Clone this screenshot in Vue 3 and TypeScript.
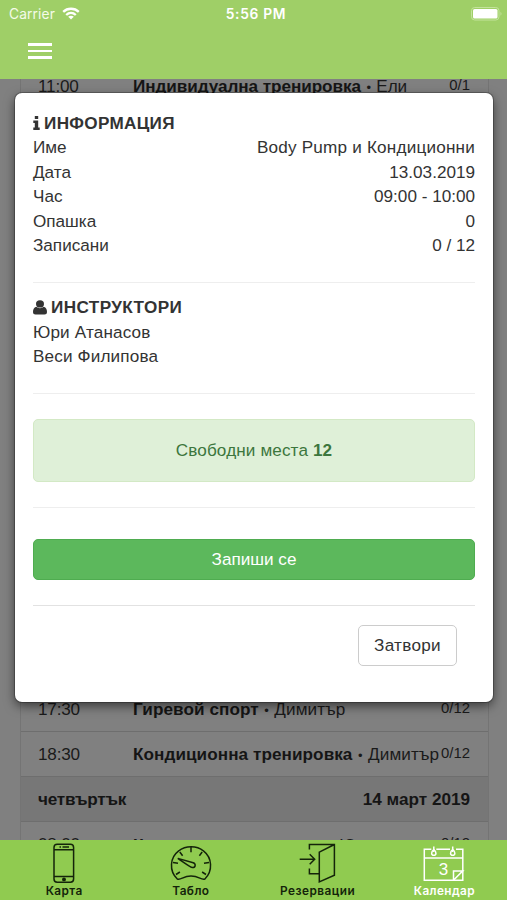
<script setup lang="ts">
interface Detail {
  label: string
  value: string
}

interface ClassRow {
  time: string
  title: string
  trainer: string
  count: string
}

const details: Detail[] = [
  { label: 'Име', value: 'Body Pump и Кондиционни' },
  { label: 'Дата', value: '13.03.2019' },
  { label: 'Час', value: '09:00 - 10:00' },
  { label: 'Опашка', value: '0' },
  { label: 'Записани', value: '0 / 12' },
]

const instructors: string[] = ['Юри Атанасов', 'Веси Филипова']

const firstClass: ClassRow = { time: '11:00', title: 'Индивидуална тренировка', trainer: 'Ели', count: '0/1' }
const eveningClasses: ClassRow[] = [
  { time: '17:30', title: 'Гиревой спорт', trainer: 'Димитър', count: '0/12' },
  { time: '18:30', title: 'Кондиционна тренировка', trainer: 'Димитър', count: '0/12' },
]
</script>

<template>
  <div class="screen">
    <header class="top">
      <div class="status">
        <div class="carrier">
          <span>Carrier</span>
          <svg width="18" height="13" viewBox="0 0 18 13" fill="none" stroke="#fff" stroke-width="2.3">
            <path d="M1.2 4.9C5.5.7 12.5.7 16.8 4.9" />
            <path d="M4.2 8C7 5.3 11 5.3 13.8 8" />
            <path d="M9 12.6 6.2 9.8C7.7 8.4 10.3 8.4 11.8 9.8Z" fill="#fff" stroke="none" />
          </svg>
        </div>
        <span class="clock">5:56 PM</span>
        <svg class="battery" width="32" height="14" viewBox="0 0 32 14">
          <rect x=".5" y=".5" width="27.5" height="12.5" rx="3.2" fill="none" stroke="#c3e39c" />
          <rect x="2" y="2" width="24.5" height="9.5" rx="1.6" fill="#fff" />
          <path d="M29.5 4.7Q31.5 6.7 29.5 8.7Z" fill="#c3e39c" />
        </svg>
      </div>
      <button class="menu" aria-label="Меню">
        <i></i><i></i><i></i>
      </button>
    </header>

    <main class="stage">
      <section class="schedule">
        <div class="row first">
          <span class="time">{{ firstClass.time }}</span>
          <span class="name"><b>{{ firstClass.title }}</b> <i class="dot">•</i> {{ firstClass.trainer }}</span>
          <span class="count">{{ firstClass.count }}</span>
        </div>
        <div class="later">
          <div v-for="row in eveningClasses" :key="row.time" class="row">
            <span class="time">{{ row.time }}</span>
            <span class="name"><b>{{ row.title }}</b> <i class="dot">•</i> {{ row.trainer }}</span>
            <span class="count">{{ row.count }}</span>
          </div>
          <div class="row day">
            <span class="weekday">четвъртък</span>
            <span class="date">14 март 2019</span>
          </div>
          <div class="row">
            <span class="time">08:00</span>
            <span class="name"><b>Кондиционна трениро</b> • Юри</span>
            <span class="count">0/12</span>
          </div>
        </div>
      </section>

      <div class="overlay">
        <div class="modal">
          <h4 class="heading">
            <svg width="7" height="14" viewBox="0 0 7 14" fill="currentColor">
              <path d="M1.8 0H5.2V3H1.8ZM.3 4.6H5.2V11.6H6.7V14H.3V11.6H1.8V7H.3Z" />
            </svg>
            <span class="info-title">ИНФОРМАЦИЯ</span>
          </h4>
          <div v-for="(item, i) in details" :key="item.label" class="line">
            <span>{{ item.label }}</span>
            <span :class="{ title: i === 0 }">{{ item.value }}</span>
          </div>
          <hr />
          <h4 class="heading people">
            <svg width="14" height="15" viewBox="0 0 13 15" preserveAspectRatio="none" fill="currentColor">
              <circle cx="6.5" cy="3.9" r="3.7" />
              <path d="M3 6.8C.8 7.3 0 9.6 0 12.1 0 13.8.9 14.6 2.3 14.6H10.7C12.1 14.6 13 13.8 13 12.1 13 9.6 12.2 7.3 10 6.8 8 8.7 5 8.7 3 6.8Z" />
            </svg>
            <span class="people-title">ИНСТРУКТОРИ</span>
          </h4>
          <div v-for="name in instructors" :key="name" class="line person">{{ name }}</div>
          <hr />
          <div class="alert"><span>Свободни места <b>12</b></span></div>
          <hr />
          <button class="enroll">Запиши се</button>
          <hr class="dark" />
          <div class="footer"><button class="close">Затвори</button></div>
        </div>
      </div>
    </main>

    <nav class="tabs">
      <a class="tab">
        <svg width="42" height="42" viewBox="0 0 42 42" fill="none" stroke="currentColor" stroke-width="1.5">
          <rect x="11" y="2.3" width="19.6" height="38" rx="3.2" />
          <path d="M11 7.7H30.6M11 34.5H30.6" />
          <path d="M16.5 4.9H18M19.5 4.9H26" />
          <circle cx="21" cy="37.4" r="1.2" fill="currentColor" />
        </svg>
        <span class="tight">Карта</span>
      </a>
      <a class="tab">
        <svg width="42" height="42" viewBox="0 0 42 42" fill="none" stroke="currentColor" stroke-width="1.5">
          <path d="M7.3 37C-1.4 28.5.2 15.3 8.4 9.1 16 3.4 26.4 3.5 33.7 9.1 42 15.5 43.2 28.8 34.9 37 31 38.3 29.2 34.1 21 34.1 12.9 34.1 11.2 38.3 7.3 37Z" />
          <path d="M21 5V10.3M9.8 10 12.6 13.8M32.2 10 29.4 13.8M3 20.5 8 21.3M39 20.5 34 21.3M6 32.5 9.9 30M36 32.5 32.1 30" />
          <path d="M7.8 16.4 23.2 20.7C26.2 21.8 25.6 25.7 22.5 25.6 20.6 25.4 16 22 7.8 16.4Z" />
        </svg>
        <span>Табло</span>
      </a>
      <a class="tab">
        <svg width="42" height="42" viewBox="0 0 42 42" fill="none" stroke="currentColor" stroke-width="1.5">
          <path d="M12.4 7.5V2.5H37.4V33.3L22.3 39.9V10.2L37.4 2.5M12.4 26.5V31.8H22.3" />
          <path d="M2.7 17.3H17.4M12.7 12.2 17.7 17.3 12.7 22.3" />
        </svg>
        <span class="wide">Резервации</span>
      </a>
      <a class="tab active">
        <svg width="42" height="42" viewBox="0 0 42 42" fill="none" stroke="currentColor" stroke-width="1.5">
          <path d="M8.3 7.3H1.3V38.3H39.8V7.3H33M13.3 7.3H27M1.3 15.9H39.8" />
          <path d="M30.5 38.3V28.9H39.8L30.5 38.3" />
          <path d="M10.8 4.5V10M29.7 4.5V10" />
          <path d="M10.8 7.5C8 9.5 7.9 13.3 10.8 13.3S13.6 9.5 10.8 7.5ZM29.7 7.5C26.9 9.5 26.8 13.3 29.7 13.3S32.5 9.5 29.7 7.5Z" />
          <text x="20.4" y="32.5" text-anchor="middle" class="calendar-day">3</text>
        </svg>
        <span>Календар</span>
      </a>
    </nav>
  </div>
</template>

<style>
html,
body {
  margin: 0;
  overflow: hidden;
}
</style>

<style scoped>
* {
  box-sizing: border-box;
}
.screen {
  width: 507px;
  height: 900px;
  display: flex;
  flex-direction: column;
  overflow: hidden;
  background: #808080;
  font-family: 'Liberation Sans', Arial, sans-serif;
  font-size: 17.14px;
  line-height: 24.5px;
  color: #333;
  white-space: nowrap;
}
button {
  font: inherit;
  padding: 0;
}
.top {
  flex: 0 0 79px;
  background: #9fcf67;
  color: #fff;
}
.status {
  height: 28px;
  padding: 0 6px 0 9px;
  display: grid;
  grid-template-columns: 1fr auto 1fr;
  align-items: center;
  font-family: Inter, sans-serif;
  font-size: 13.8px;
}
.carrier {
  display: flex;
  align-items: center;
  gap: 7px;
  color: #f4fbe9;
  letter-spacing: 0.1px;
}
.carrier svg {
  margin-top: -1px;
}
.clock {
  margin-left: 2px;
  font-weight: 600;
  letter-spacing: 0.7px;
}
.battery {
  justify-self: end;
  margin: -1px -2px 0 0;
}
.menu {
  display: flex;
  flex-direction: column;
  gap: 4px;
  margin: 15px 0 0 28px;
  border: 0;
  background: none;
}
.menu i {
  width: 24px;
  height: 2.6px;
  background: #fff;
}
.stage {
  height: 761px;
  display: grid;
  overflow: hidden;
}
.schedule,
.overlay {
  grid-area: 1 / 1;
  min-height: 0;
  height: 761px;
}
.schedule {
  margin: 0 18px 0 20px;
  display: flex;
  flex-direction: column;
  justify-content: space-between;
  border-left: 1px solid #747474;
  border-right: 1px solid #747474;
  background: #808080;
  color: #1a1a1a;
}
.later {
  height: 153px;
}
.row {
  height: 45px;
  padding: 1px 18px 0 17px;
  display: grid;
  grid-template-columns: 95px 1fr auto;
  align-items: center;
  border-bottom: 1px solid #6e6e6e;
}
.row.first {
  margin-top: -15px;
}
.name {
  padding-top: 2px;
}
.first .name {
  letter-spacing: -0.06px;
}
.name b {
  color: #151515;
}
.dot {
  display: inline-block;
  width: 6px;
  font-size: 13px;
  font-style: normal;
  text-align: center;
}
.later .name {
  letter-spacing: 0.07px;
}
.time {
  letter-spacing: -0.2px;
}
.count {
  font-size: 14.9px;
  margin-top: -2px;
}
.row.day {
  display: flex;
  justify-content: space-between;
  background: #777;
  font-weight: 700;
  color: #151515;
}
.weekday {
  letter-spacing: -0.2px;
}
.overlay {
  z-index: 1;
  padding: 13.5px 14px 0 15px;
}
.modal {
  height: 609.5px;
  padding: 18px 18px 0;
  background: #fff;
  border-radius: 7px;
  box-shadow: 0 0 0 1px rgba(0, 0, 0, 0.25), 0 4px 11px rgba(0, 0, 0, 0.55);
}
.heading {
  margin: 0;
  display: flex;
  align-items: center;
  gap: 4px;
  font-size: 17.14px;
  font-weight: 700;
  line-height: 24.5px;
}
.info-title {
  letter-spacing: 0.32px;
}
.people-title {
  letter-spacing: 0.4px;
}
.line {
  display: flex;
  justify-content: space-between;
}
.title {
  letter-spacing: 0.2px;
}
.person {
  letter-spacing: 0.15px;
}
hr {
  height: 1px;
  margin: 24.5px 0;
  border: 0;
  background: #eee;
}
.people {
  margin-top: -12.5px;
}
.alert {
  height: 63.5px;
  display: flex;
  align-items: center;
  justify-content: center;
  background: #dff0d8;
  border: 1px solid #d3e9c5;
  border-radius: 5px;
  color: #3c763d;
  letter-spacing: 0.12px;
}
.enroll {
  display: block;
  width: 100%;
  height: 41.5px;
  margin-top: 31px;
  color: #fff;
  background: #5cb85c;
  border: 1px solid #4fac50;
  border-radius: 5px;
}
hr.dark {
  margin-bottom: 19px;
  background: #e2e2e2;
}
.footer {
  display: flex;
  justify-content: flex-end;
  padding-right: 18px;
}
.close {
  width: 99px;
  height: 41px;
  color: #333;
  background: #fff;
  border: 1px solid #ccc;
  border-radius: 5px;
  letter-spacing: 0.3px;
}
.tabs {
  flex: 0 0 60px;
  display: grid;
  grid-template-columns: repeat(4, 1fr);
  background: #90cb50;
}
.tab {
  display: flex;
  flex-direction: column;
  align-items: center;
  padding: 2px 0 0 1.5px;
  font-family: Inter, sans-serif;
  font-size: 11.8px;
  font-weight: 600;
  line-height: 15px;
  letter-spacing: 0.4px;
  color: #14240a;
}
.wide {
  letter-spacing: 0.5px;
}
.active {
  color: #fff;
}
.calendar-day {
  font: 400 17px 'Liberation Sans', sans-serif;
  letter-spacing: 0;
  fill: currentColor;
  stroke: none;
}
</style>
